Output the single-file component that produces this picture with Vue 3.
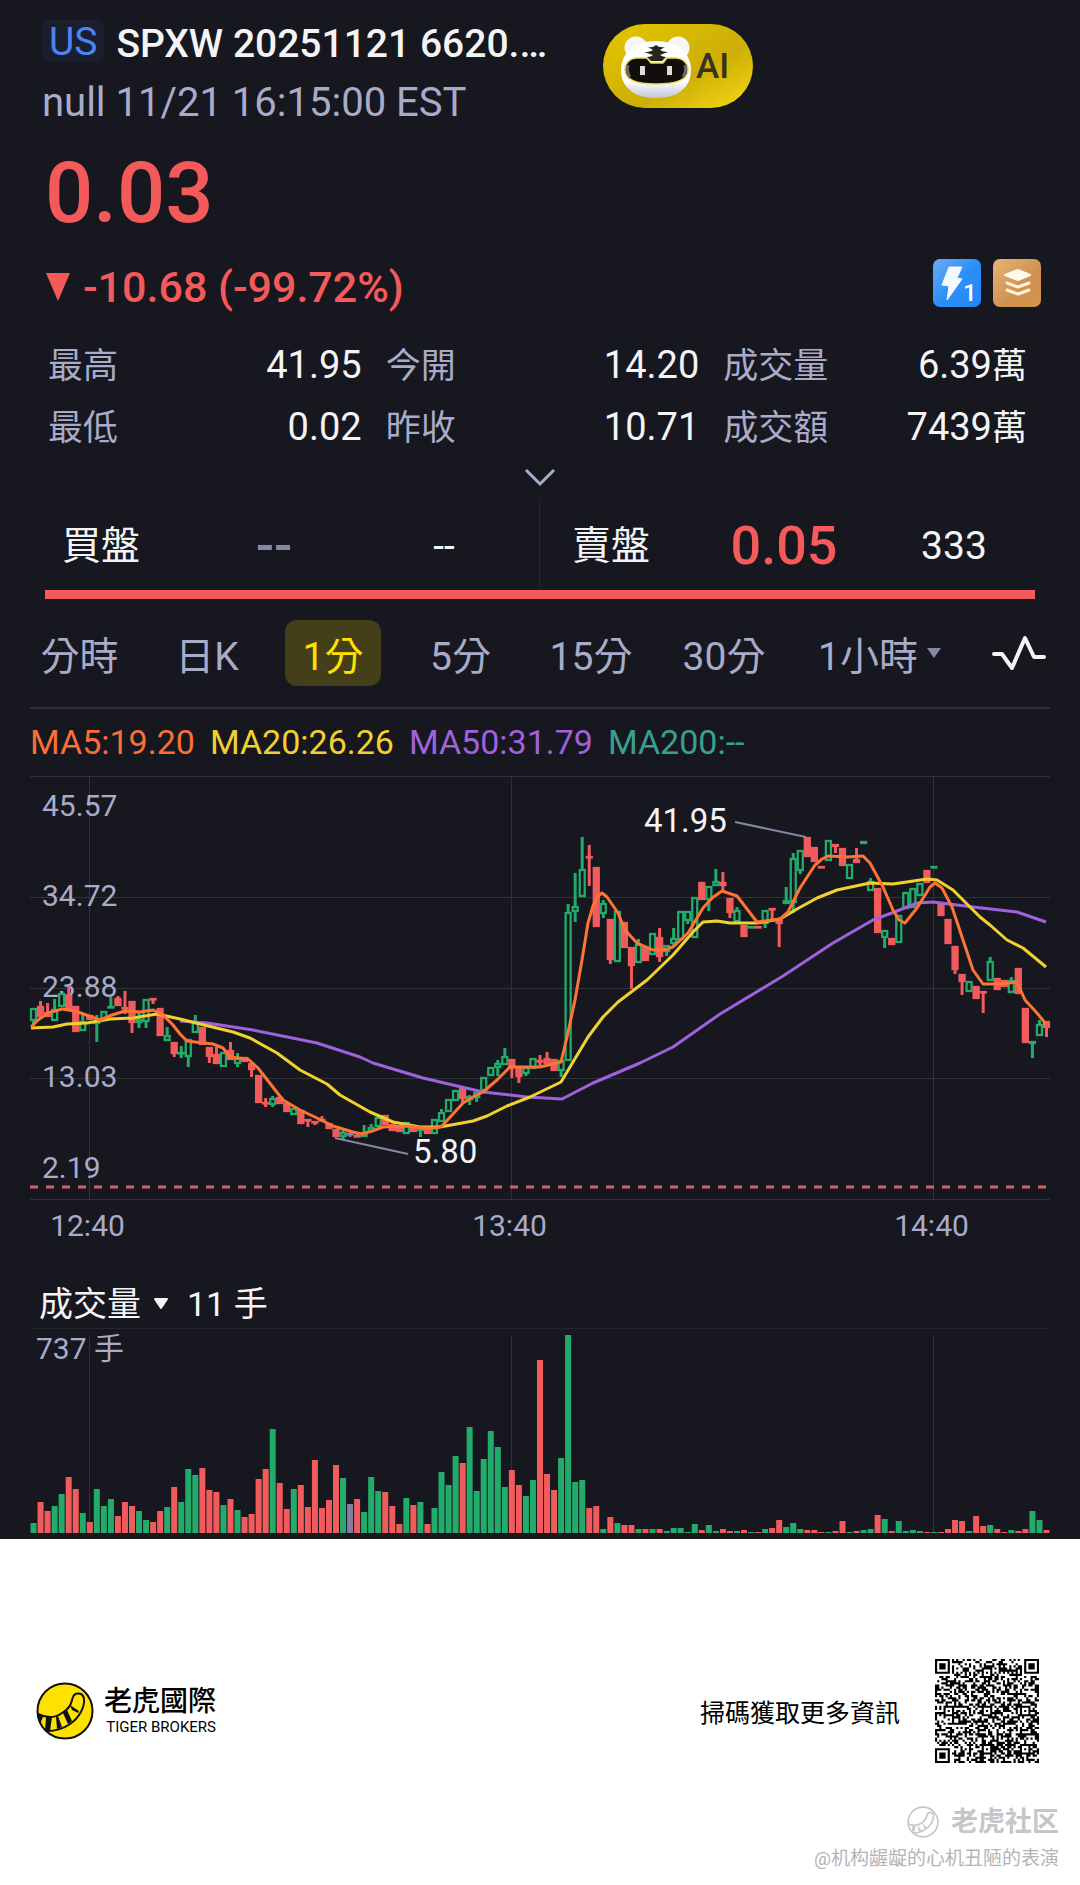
<template>
  <main class="page">
    <section class="quote">
      <header class="head">
        <div class="head-text">
          <div class="title-row">
            <span class="market">US</span>
            <h1 class="title">SPXW 20251121 6620.…</h1>
          </div>
          <p class="time">null 11/21 16:15:00 EST</p>
        </div>
        <button class="ai" type="button">
          <svg width="75" height="68" viewBox="16 8 75 68" aria-hidden="true">
            <defs>
              <linearGradient id="face" x1="0" y1="0" x2="0" y2="1">
                <stop offset="0.7" stop-color="#fff" />
                <stop offset="1" stop-color="#c3c3dc" />
              </linearGradient>
            </defs>
            <circle cx="33" cy="24" r="11.5" fill="#f6f6fa" />
            <circle cx="75" cy="24" r="11.5" fill="#f6f6fa" />
            <path d="M53 17C74 17 88 29 88 46C88 64 74 74 53 74C32 74 18 64 18 46C18 29 32 17 53 17Z" fill="url(#face)" />
            <path d="M34 34H44L48 39H60L64 34H72C80 34 85 39 85 46C85 56 72 60 53 60C34 60 22 56 22 46C22 39 27 34 34 34Z" fill="#120e0b" stroke="#e8dc50" stroke-width="1.5" />
            <path d="M25 41Q23 47 27 53M82 41Q84 47 80 53" fill="none" stroke="#6d6478" stroke-width="3" />
            <path d="M45 23Q50 24 53 21Q56 24 62 23L57 26Q60 28 65 28L57 31Q60 33 63 33L59 37H48L44 33Q48 33 50 31L41 28Q47 28 50 26Z" fill="#28251f" />
            <rect x="37" y="42" width="5" height="9" fill="#dcdce0" />
            <rect x="64" y="42" width="5" height="9" fill="#dcdce0" />
          </svg>
          <span>AI</span>
        </button>
      </header>

      <p class="price">0.03</p>
      <div class="change-row">
        <p class="change">
          <svg width="26" height="30" viewBox="0 0 26 30" aria-hidden="true"><path d="M1 1H25L13 29Z" fill="#f55a5a" /></svg>
          -10.68 (-99.72%)
        </p>
        <div class="chips">
          <svg class="chip blue" viewBox="0 0 48 48" role="img" aria-label="Level 1">
            <path d="M16 8H29L24 19L29 20L14 41L16 27L9 26Z" fill="#f3faff" stroke="#f3faff" stroke-linejoin="round" />
            <text x="30" y="42" font-size="24" font-weight="500" fill="#fff">1</text>
          </svg>
          <svg class="chip gold" viewBox="0 0 48 48" role="img" aria-label="Depth">
            <path d="M12 16L25 11L37 16L25 21Z" fill="#fff8ec" stroke="#fff8ec" stroke-width="2" stroke-linejoin="round" />
            <path d="M14 24L25 28L36 24M14 31L25 35L36 31" fill="none" stroke="#fff1dc" stroke-width="3" stroke-linecap="round" stroke-linejoin="round" />
          </svg>
        </div>
      </div>

      <dl class="stats">
        <div v-for="s in stats" :key="s.label" class="stat">
          <dt>{{ s.label }}</dt>
          <dd>{{ s.value }}<span v-if="s.unit" class="unit">{{ s.unit }}</span></dd>
        </div>
      </dl>

      <button class="expand" type="button" aria-label="展開">
        <svg width="32" height="20" viewBox="0 0 32 20" aria-hidden="true"><path d="M2 2L16 16L30 2" fill="none" stroke="#a9abc9" stroke-width="3" /></svg>
      </button>

      <div class="depth">
        <div class="side">
          <span class="side-name">買盤</span>
          <span class="side-price none">--</span>
          <span class="side-size">--</span>
        </div>
        <div class="side ask">
          <span class="side-name">賣盤</span>
          <span class="side-price">0.05</span>
          <span class="side-size">333</span>
        </div>
      </div>
      <div class="ratio"></div>

      <nav class="tabs">
        <button v-for="t in tabs" :key="t" type="button" :class="{ tab: true, active: t === current }" @click="current = t">
          {{ t }}<svg v-if="t === '1小時'" class="caret" width="16" height="12" viewBox="0 0 16 12" aria-hidden="true"><path d="M1 1H15L8 11Z" fill="#8587a3" /></svg>
        </button>
        <button class="tab" type="button" aria-label="指標">
          <svg width="54" height="40" viewBox="0 0 54 40" aria-hidden="true">
            <path d="M2 21H10L20 35L33 5L42 24H52" fill="none" stroke="#f4f4f6" stroke-width="4" stroke-linejoin="round" stroke-linecap="round" />
          </svg>
        </button>
      </nav>

      <div class="chart">
        <div class="legend">
          <span class="ma5">MA5:19.20</span>
          <span class="ma20">MA20:26.26</span>
          <span class="ma50">MA50:31.79</span>
          <span class="ma200">MA200:--</span>
        </div>

        <svg class="plot" viewBox="0 0 1020 480">
          <g stroke="#303237">
            <line v-for="y in [0.5, 121.5, 212.5, 302.5, 423.5]" :key="y" x1="0" x2="1020" :y1="y" :y2="y" />
            <line v-for="t in times" :key="t.label" :x1="t.x" :x2="t.x" y1="0" y2="424" />
          </g>
          <g fill="#a9abc9" font-size="30">
            <text v-for="l in levels" :key="l.label" x="12" :y="l.y">{{ l.label }}</text>
            <text v-for="t in times" :key="t.label" :x="t.x - 2" y="460" text-anchor="middle">{{ t.label }}</text>
          </g>
          <g v-for="(c, i) in candles" :key="i" :stroke="color(c)" :fill="c[0] === 'g' ? '#16171f' : color(c)">
            <path :d="wick(c, i)" stroke-width="3" />
            <rect :x="cx(i) - 2.5" :y="c[2] + 1" width="5" :height="Math.max(c[3] - c[2] - 2, 0.5)" stroke-width="2.3" />
          </g>
          <g fill="none" stroke-width="3" stroke-linejoin="round">
            <polyline :points="ma50" stroke="#a061dd" />
            <polyline :points="ma20" stroke="#f2d12f" />
            <polyline :points="ma5" stroke="#ff7434" />
          </g>
          <line x1="0" x2="1016" y1="411" y2="411" stroke="#dd5a61" stroke-width="3" stroke-dasharray="8 8" />
          <path d="M705 46L776 61M305 362L378 378" stroke="#8587a3" stroke-width="2" />
          <g fill="#f4f4f6" font-size="33">
            <text x="614" y="56">41.95</text>
            <text x="383" y="387">5.80</text>
          </g>
        </svg>

        <div class="volume-head">
          <button class="indicator" type="button">
            成交量
            <svg width="16" height="12" viewBox="0 0 16 12" aria-hidden="true"><path d="M2 1H14L8 10Z" fill="#f4f4f6" stroke="#f4f4f6" stroke-width="2" stroke-linejoin="round" /></svg>
          </button>
          <span>11 手</span>
        </div>
        <svg class="plot" viewBox="0 0 1020 198">
          <line v-for="t in times" :key="t.label" :x1="t.x" :x2="t.x" y1="0" y2="198" stroke="#303237" />
          <text x="6" y="24" font-size="30" fill="#a9abc9">737 手</text>
          <rect v-for="(c, i) in candles" :key="i" :x="cx(i) - 3" :y="198 - c[5]" width="6" :height="c[5]" :fill="color(c)" />
        </svg>
      </div>
    </section>

    <footer class="foot">
      <div class="brand-row">
        <div class="brand">
          <svg width="58" height="58" viewBox="0 0 58 58" aria-hidden="true">
            <circle cx="29" cy="29" r="27.5" fill="#ffe100" stroke="#111" stroke-width="2" />
            <path d="M2 32C10 36 19 36 26 31C36 25 35 20 37 15C39 10 47 10 48 17C49 25 43 36 34 42C27 47 19 49 11 49" fill="none" stroke="#111" stroke-width="2" />
            <path d="M2 32L7 35L4 42ZM10 35H16L14 49H9ZM20 35L22 34L26 45L21 47ZM27 31L31 28L36 39L32 42ZM34 23L43 29L42 31L36 28Z" fill="#111" />
          </svg>
          <div class="brand-name">
            <strong>老虎國際</strong>
            <span>TIGER BROKERS</span>
          </div>
        </div>
        <div class="scan">
          <span>掃碼獲取更多資訊</span>
          <svg width="104" height="104" viewBox="0 0 49 49" role="img" aria-label="QR code">
            <path :d="qr" fill="#000" />
          </svg>
        </div>
      </div>
      <div class="mark">
        <svg width="32" height="32" viewBox="0 0 58 58" aria-hidden="true">
          <circle cx="29" cy="29" r="27" fill="none" stroke="#c6c6ca" stroke-width="3" />
          <path d="M2 32C10 36 19 36 26 31C36 25 35 20 37 15C39 10 47 10 48 17C49 25 43 36 34 42C27 47 19 49 11 49" fill="none" stroke="#c6c6ca" stroke-width="3" />
          <path d="M10 35H15L14 46H9ZM20 35L26 45L21 46ZM27 31L36 39L32 41Z" fill="#c6c6ca" />
        </svg>
        <strong>老虎社区</strong>
      </div>
      <p class="author">@机构龌龊的心机丑陋的表演</p>
    </footer>
  </main>
</template>

<script setup>
import { ref } from 'vue';

const stats = [
  { label: '最高', value: '41.95' },
  { label: '今開', value: '14.20' },
  { label: '成交量', value: '6.39', unit: '萬' },
  { label: '最低', value: '0.02' },
  { label: '昨收', value: '10.71' },
  { label: '成交額', value: '7439', unit: '萬' },
];

const tabs = ['分時', '日K', '1分', '5分', '15分', '30分', '1小時'];
const current = ref('1分');

const levels = [
  { label: '45.57', y: 40 },
  { label: '34.72', y: 130 },
  { label: '23.88', y: 221 },
  { label: '13.03', y: 311 },
  { label: '2.19', y: 402 },
];
const times = [
  { label: '12:40', x: 59.5 },
  { label: '13:40', x: 481.5 },
  { label: '14:40', x: 903.5 },
];

// kind, high, body top, body bottom, low, volume (all in plot units)
const candles = [
  ['g', 232, 232, 245, 250, 10], ['r', 225, 230, 241, 241, 31], ['r', 227, 236, 241, 241, 22], ['g', 223, 233, 245, 245, 27],
  ['g', 217, 217, 231, 231, 39], ['r', 210, 219, 233, 233, 56], ['r', 230, 230, 256, 256, 44], ['g', 237, 245, 255, 255, 20],
  ['r', 239, 239, 244, 244, 11], ['g', 239, 245, 248, 266, 44], ['g', 235, 235, 243, 243, 27], ['g', 221, 230, 232, 232, 34],
  ['r', 220, 222, 230, 230, 17], ['r', 215, 231, 233, 238, 31], ['r', 225, 225, 247, 257, 27], ['g', 237, 243, 247, 252, 22],
  ['g', 223, 223, 246, 252, 13], ['r', 222, 222, 223, 228, 11], ['r', 232, 232, 260, 260, 22], ['g', 251, 259, 265, 265, 26],
  ['r', 266, 266, 278, 281, 46], ['g', 270, 276, 278, 282, 31], ['g', 263, 263, 281, 291, 64], ['g', 239, 246, 257, 257, 58],
  ['r', 251, 251, 269, 269, 65], ['r', 271, 271, 281, 287, 43], ['r', 271, 278, 288, 288, 41], ['g', 276, 276, 291, 291, 28],
  ['r', 266, 274, 284, 284, 34], ['g', 277, 282, 288, 291, 23], ['r', 281, 281, 286, 286, 16], ['r', 287, 287, 294, 301, 19],
  ['r', 299, 299, 327, 327, 54], ['r', 322, 326, 328, 331, 64], ['g', 320, 322, 329, 331, 104], ['r', 321, 321, 328, 328, 50],
  ['r', 327, 327, 336, 336, 24], ['g', 332, 332, 339, 339, 44], ['r', 334, 334, 348, 348, 48], ['r', 343, 343, 345, 351, 26],
  ['r', 345, 345, 347, 349, 73], ['r', 340, 343, 345, 345, 25], ['r', 347, 347, 353, 353, 33], ['r', 353, 353, 361, 361, 68],
  ['g', 354, 356, 361, 363, 55], ['n', 355, 357, 359, 361, 29], ['r', 358, 359, 361, 361, 34], ['g', 349, 356, 361, 361, 21],
  ['g', 348, 351, 356, 356, 56], ['g', 341, 341, 351, 351, 42], ['r', 339, 339, 349, 349, 41], ['r', 348, 348, 355, 355, 27],
  ['r', 350, 350, 356, 356, 9], ['g', 346, 346, 358, 358, 35], ['r', 350, 350, 356, 356, 28], ['g', 350, 351, 355, 361, 31],
  ['r', 352, 352, 358, 358, 9], ['g', 343, 343, 358, 358, 25], ['g', 333, 336, 346, 346, 61], ['g', 323, 323, 336, 336, 48],
  ['g', 314, 314, 325, 325, 77], ['r', 311, 311, 323, 327, 70], ['g', 319, 320, 324, 329, 106], ['g', 315, 316, 322, 326, 42],
  ['g', 301, 301, 315, 315, 74], ['g', 291, 291, 300, 300, 102], ['g', 284, 287, 292, 300, 86], ['g', 272, 280, 289, 289, 46],
  ['r', 283, 283, 292, 302, 63], ['r', 292, 292, 301, 307, 48], ['g', 291, 291, 298, 300, 37], ['g', 282, 282, 293, 293, 53],
  ['r', 279, 284, 286, 290, 173], ['r', 276, 282, 288, 288, 59], ['r', 283, 283, 295, 295, 43], ['g', 284, 284, 295, 301, 75],
  ['g', 128, 136, 285, 285, 198], ['g', 97, 130, 136, 146, 51], ['g', 61, 93, 121, 121, 53], ['r', 69, 80, 82, 110, 25],
  ['r', 91, 91, 151, 151, 27], ['g', 124, 127, 138, 142, 4], ['r', 143, 143, 184, 188, 16], ['g', 135, 135, 186, 186, 10],
  ['r', 146, 146, 172, 172, 8], ['r', 171, 171, 190, 213, 8], ['g', 163, 168, 187, 187, 4], ['r', 171, 171, 185, 185, 4],
  ['g', 157, 157, 179, 179, 4], ['r', 152, 161, 181, 186, 4], ['g', 169, 169, 176, 180, 2], ['g', 152, 162, 168, 170, 5],
  ['g', 135, 135, 164, 164, 5], ['g', 135, 135, 145, 148, 1], ['g', 121, 121, 162, 162, 9], ['r', 106, 106, 124, 124, 3],
  ['g', 110, 110, 124, 135, 8], ['g', 93, 105, 110, 110, 2], ['r', 96, 106, 110, 115, 4], ['r', 122, 122, 137, 142, 2],
  ['g', 131, 134, 146, 146, 2], ['r', 149, 149, 161, 161, 3], ['g', 150, 150, 152, 152, 1], ['r', 150, 150, 152, 152, 1],
  ['g', 134, 134, 148, 152, 4], ['r', 132, 132, 134, 144, 5], ['r', 143, 143, 148, 171, 13], ['g', 111, 124, 128, 128, 6],
  ['g', 77, 82, 127, 137, 10], ['g', 74, 74, 95, 98, 4], ['r', 61, 61, 81, 81, 3], ['r', 71, 71, 86, 86, 3],
  ['r', 90, 90, 92, 92, 1], ['g', 64, 64, 85, 85, 1], ['r', 68, 68, 71, 77, 2], ['r', 72, 72, 90, 90, 12],
  ['g', 88, 88, 103, 103, 1], ['r', 72, 83, 87, 87, 2], ['g', 65, 65, 68, 68, 3], ['g', 102, 105, 115, 115, 4],
  ['r', 112, 112, 157, 157, 18], ['g', 154, 154, 162, 172, 14], ['r', 162, 162, 169, 169, 2], ['g', 139, 139, 167, 167, 12],
  ['g', 116, 116, 133, 133, 2], ['g', 112, 112, 132, 132, 3], ['g', 107, 107, 120, 120, 2], ['r', 94, 94, 107, 107, 1],
  ['g', 90, 90, 92, 92, 1], ['r', 128, 128, 140, 140, 1], ['r', 143, 143, 168, 168, 4], ['r', 170, 170, 194, 198, 13],
  ['r', 198, 198, 206, 219, 12], ['g', 205, 205, 216, 216, 2], ['r', 210, 210, 223, 223, 17], ['r', 215, 215, 217, 237, 7],
  ['g', 181, 185, 205, 205, 8], ['r', 202, 202, 214, 214, 4], ['r', 204, 204, 211, 211, 1], ['g', 201, 204, 217, 217, 3],
  ['r', 192, 192, 218, 218, 2], ['r', 232, 232, 267, 267, 4], ['g', 265, 265, 268, 282, 22], ['g', 244, 248, 260, 260, 13],
  ['r', 245, 245, 252, 261, 3],
];

const ma5 = '1,251 8,244 18,237 32,233 45,235 62,241 70,244 82,239 95,235 110,236 123,234 133,239 143,249 150,258 157,265 165,266 183,268 193,272 200,281 218,283 228,292 253,324 270,334 287,342 303,350 323,356 332,358 342,355 353,351 377,350 393,352 406,352 412,350 433,327 443,321 453,316 467,304 480,291 510,291 531,286 537,261 545,224 552,184 558,147 563,130 567,121 572,117 577,121 588,137 595,154 607,167 623,174 634,174 643,171 658,157 673,132 682,122 692,115 707,120 717,133 727,146 750,143 758,136 770,112 785,89 792,83 798,80 817,81 833,80 840,87 853,111 863,134 869,144 875,147 887,132 900,111 905,107 912,112 922,131 933,164 943,194 953,208 970,208 987,206 995,224 1007,237 1016,248';
const ma20 = '1,252 23,251 37,248 57,247 80,243 103,242 127,238 150,243 170,248 203,256 220,262 247,277 270,294 297,308 310,319 340,336 363,346 390,351 410,351 443,345 457,340 477,330 500,321 531,306 543,286 558,261 573,241 588,226 617,204 643,179 663,156 673,146 687,145 700,147 727,147 750,143 767,133 787,122 807,114 840,107 863,108 897,103 907,104 923,114 950,141 960,149 977,164 993,172 1016,191';
const ma50 = '150,245 177,247 223,254 287,267 330,281 343,287 393,302 453,316 497,321 532,323 563,307 610,287 643,271 690,238 753,200 803,167 843,144 867,135 887,127 903,126 943,131 987,136 1016,146';

const colors = { g: '#23ab6c', r: '#f15b5b', n: '#7f7fa2' };
const color = (c) => colors[c[0]];
const cx = (i) => (i + 0.5) * 1020 / candles.length;
const wick = (c, i) => `M${cx(i)} ${c[1]}V${c[2]}M${cx(i)} ${c[3]}V${c[4]}`;

// finder and alignment squares first, the rest is filled with noise
const rings = [[3, 3, 3], [45, 3, 3], [3, 45, 3], [24, 6, 2], [6, 24, 2], [24, 24, 2], [42, 24, 2], [24, 42, 2], [42, 42, 2]];
let seed = 20251121;
let qr = '';
for (let y = 0; y < 49; y++) {
  for (let x = 0; x < 49; x++) {
    seed = (seed * 1103515245 + 12345) % 2147483648;
    let on = seed / 2147483648 < 0.5;
    if (x === 6) on = y % 2 === 0;
    if (y === 6) on = x % 2 === 0;
    for (const [rx, ry, r] of rings) {
      const d = Math.max(Math.abs(x - rx), Math.abs(y - ry));
      if (d <= r) on = r === 3 ? d !== 2 : d !== 1;
      else if (r === 3 && d === 4) on = false;
    }
    if (on) qr += `M${x} ${y}h1v1h-1z`;
  }
}
</script>

<style>
body {
  margin: 0;
  background: #fff;
}
</style>

<style scoped>
.page {
  font-family: Roboto, "Noto Sans CJK TC", sans-serif;
  color: #f4f4f6;
}

p, h1, dl, dd { margin: 0; }

button {
  font: inherit;
  color: inherit;
  background: none;
  border: 0;
  padding: 0;
  cursor: pointer;
}

svg { display: block; }

.quote {
  background: #16171f;
  padding: 20px 0 6px;
}

.head {
  display: flex;
  align-items: flex-start;
  padding-left: 42px;
  gap: 58px;
}

.head-text { width: 503px; }

.title-row {
  display: flex;
  gap: 12px;
}

.market {
  box-sizing: border-box;
  height: 42px;
  padding: 0 7px;
  line-height: 44px;
  font-size: 39px;
  color: #4f83f5;
  background: #1a1f30;
  border-radius: 6px;
}

.title {
  font-size: 39px;
  font-weight: 500;
  line-height: 48px;
  white-space: nowrap;
}

.time {
  margin-top: 11px;
  font-size: 40px;
  line-height: 48px;
  color: #a9abc9;
}

.ai {
  display: flex;
  align-items: center;
  width: 150px;
  height: 84px;
  margin-top: 4px;
  padding-left: 16px;
  gap: 2px;
  border-radius: 42px;
  background: linear-gradient(150deg, #dfc200 10%, #cdae08 60%, #ead010 90%);
  color: #37331c;
  font-size: 35px;
  font-weight: 500;
}

.price {
  margin-top: 16px;
  padding-left: 45px;
  font-size: 85px;
  font-weight: 500;
  line-height: 100px;
  color: #f55a5a;
}

.change-row {
  display: flex;
  justify-content: space-between;
  margin-top: 16px;
  padding: 0 39px 0 45px;
}

.change {
  display: flex;
  align-items: center;
  gap: 12px;
  font-size: 43px;
  font-weight: 500;
  line-height: 56px;
  color: #f55a5a;
}

.chips {
  display: flex;
  gap: 12px;
}

.chip {
  width: 48px;
  height: 48px;
  border-radius: 7px;
}
.chip.blue { background: linear-gradient(135deg, #6cabf5, #2e8ff8 50%, #1f86f5); }
.chip.gold { background: linear-gradient(135deg, #e6b478, #cf9150 60%, #d6944a); }

.stats {
  display: grid;
  grid-template-columns: 314fr 314fr 304fr;
  grid-auto-rows: 62px;
  column-gap: 24px;
  margin-top: 19px;
  padding: 0 53px 0 48px;
}

.stat {
  display: flex;
  align-items: baseline;
  justify-content: space-between;
  font-size: 38px;
  line-height: 62px;
}
.stat dt {
  font-size: 35px;
  color: #a9abc9;
}
.unit {
  font-size: 35px;
  line-height: 1;
}

.expand {
  display: flex;
  align-items: center;
  justify-content: center;
  width: 100%;
  height: 40px;
}

.depth {
  display: grid;
  grid-template-columns: 477fr 500fr;
  height: 92px;
  padding: 0 41px 0 62px;
}

.side {
  display: grid;
  grid-template-columns: 127fr 170fr 170fr;
  align-items: center;
  padding: 4px 10px 0 0;
  font-size: 39px;
  line-height: 60px;
}
.side.ask {
  padding: 4px 0 0 32px;
  border-left: 1px solid #26272e;
}

.side-price {
  font-size: 54px;
  font-weight: 500;
  text-align: center;
  color: #f55a5a;
}
.side-price.none { color: #8587a3; }
.side-size { text-align: center; }

.ratio {
  height: 9px;
  margin: 0 45px;
  background: #f15b5b;
}

.tabs {
  display: grid;
  grid-template-columns: 129fr 126fr 126fr 129fr 132fr 134fr 178fr 100fr;
  justify-items: center;
  padding: 21px 11px 21px 15px;
}

.tab {
  display: flex;
  align-items: center;
  height: 66px;
  padding: 0 18px;
  gap: 8px;
  font-size: 39px;
  color: #a9abc9;
  border-radius: 12px;
  white-space: nowrap;
}
.tab.active {
  color: #ffe100;
  background: #443e19;
}

.chart {
  margin: 0 30px;
  border-top: 2px solid #303136;
}

.legend {
  display: flex;
  gap: 15px;
  font-size: 34px;
  line-height: 67px;
}
.ma5 { color: #f96f36; }
.ma20 { color: #f2d12f; }
.ma50 { color: #a061dd; }
.ma200 { color: #38a08f; }

.plot {
  width: 100%;
  height: auto;
  overflow: visible;
}

.volume-head {
  display: flex;
  gap: 18px;
  margin: 24px 0 6px;
  padding-left: 9px;
  font-size: 34px;
  line-height: 48px;
  border-bottom: 1px solid #26272c;
}

.indicator {
  display: flex;
  align-items: center;
  gap: 12px;
}

.foot {
  padding: 120px 21px 7px 36px;
  color: #000;
}

.brand-row {
  display: flex;
  align-items: center;
  justify-content: space-between;
  padding-right: 20px;
}

.brand {
  display: flex;
  align-items: center;
  gap: 10px;
}

.brand-name {
  display: flex;
  flex-direction: column;
  align-items: flex-end;
  font-size: 15px;
  line-height: 18px;
}
.brand-name strong {
  font-size: 28px;
  font-weight: 500;
  line-height: 32px;
}

.scan {
  display: flex;
  align-items: center;
  gap: 35px;
  font-size: 25px;
}

.mark {
  display: flex;
  align-items: center;
  justify-content: flex-end;
  gap: 12px;
  margin-top: 41px;
  font-family: Roboto, "Noto Sans CJK SC", sans-serif;
  font-size: 27px;
  line-height: 36px;
  color: #c6c6ca;
}

.author {
  margin-top: 1px;
  font-family: Roboto, "Noto Sans CJK SC", sans-serif;
  font-size: 19px;
  line-height: 36px;
  text-align: right;
  color: #b4b4b8;
}
</style>
